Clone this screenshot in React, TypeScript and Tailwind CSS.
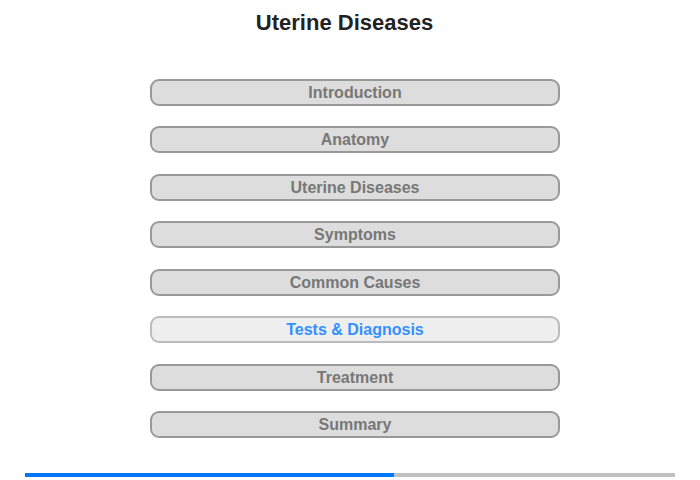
import React from 'react';

const sections = [
  'Introduction',
  'Anatomy',
  'Uterine Diseases',
  'Symptoms',
  'Common Causes',
  'Tests & Diagnosis',
  'Treatment',
  'Summary',
];

const activeIndex = 5;

export default function App() {
  return (
    <div className="w-[700px] h-[480px] bg-white font-['Liberation_Sans',Arial,sans-serif]">
      <h1 className="pt-[10px] pr-[11px] text-center text-[22px] leading-[26px] font-bold text-[#222]">
        Uterine Diseases
      </h1>

      <nav className="mt-[42.5px] ml-[150px] w-[410px] flex flex-col gap-[20.5px]">
        {sections.map((name, i) => (
          <button
            key={name}
            className={
              i === activeIndex
                ? 'h-[27px] rounded-[9px] border-2 border-[#bbbbbb] bg-[#eeeeee] text-[16px] leading-[23px] font-bold text-[#3390ff]'
                : 'h-[27px] rounded-[9px] border-2 border-[#999999] bg-[#dddddd] text-[16px] leading-[23px] font-bold text-[#777777]'
            }
          >
            {name}
          </button>
        ))}
      </nav>

      {/* progress */}
      <div className="mt-[35px] mx-[25px] h-[4px] flex bg-[#c0c0c0]">
        <div className="h-full bg-[#0077ff]" style={{ width: `${(369 / 650) * 100}%` }} />
      </div>
    </div>
  );
}
